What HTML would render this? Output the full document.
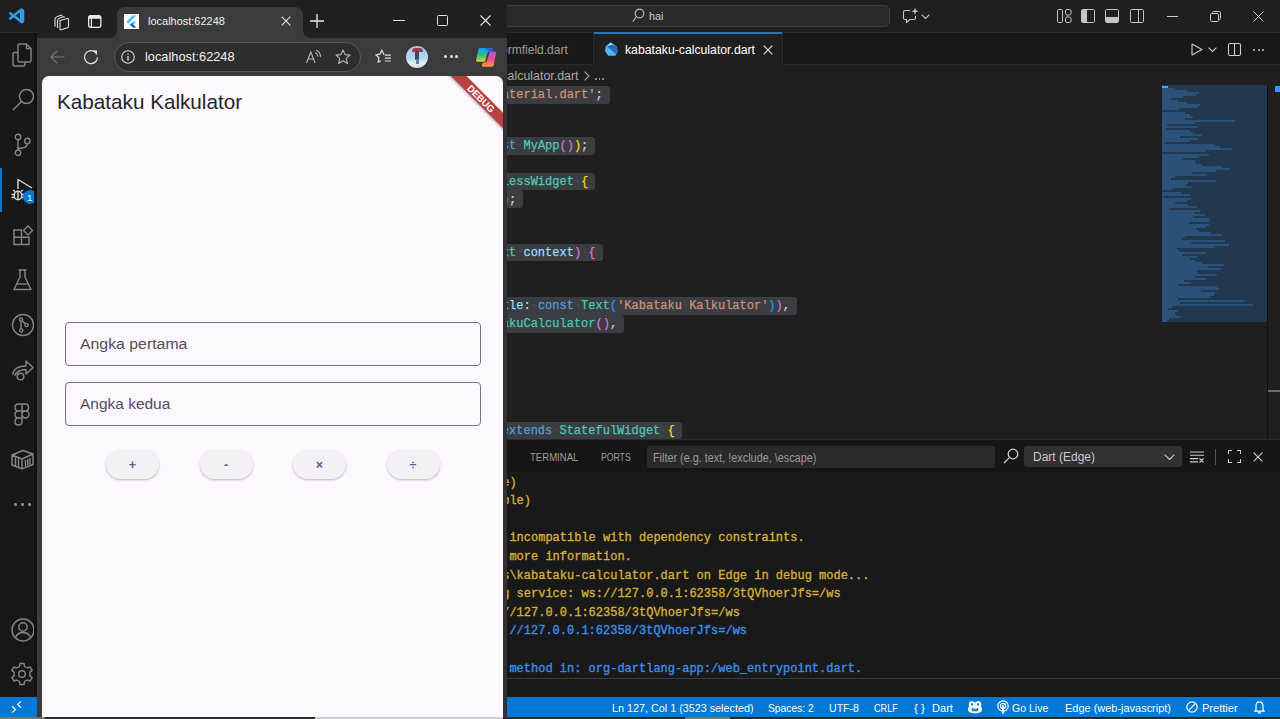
<!DOCTYPE html>
<html><head><meta charset="utf-8">
<style>
*{margin:0;padding:0;box-sizing:border-box}
html,body{width:1280px;height:719px;overflow:hidden;background:#1f1f1f;font-family:"Liberation Sans",sans-serif;position:relative}
.a{position:absolute}
.t{line-height:1;white-space:pre}
svg{position:absolute;overflow:visible}
.sel{height:17.8px;background:#3a3d41;border-radius:3px}
.code{font-family:"Liberation Mono",monospace;font-size:12px;line-height:17.8px;white-space:pre;-webkit-text-stroke:0.25px currentColor}
.code span{-webkit-text-stroke:0.25px}
.term{-webkit-text-stroke:0.3px}
.ws{color:#505050}
.btn{width:53px;height:29.8px;border-radius:15px;background:#f5f0f6;box-shadow:0 1px 3px rgba(0,0,0,.2),0 1px 1px rgba(0,0,0,.08);color:#655594;font-size:12.5px;font-weight:bold;text-align:center;line-height:31.5px}
</style></head><body>
<div class="a" style="left:0px;top:0px;width:1280px;height:32px;background:#1f1f1f;"></div>
<div class="a" style="left:0px;top:32px;width:1280px;height:1px;background:#2b2b2b;"></div>
<svg style="left:0px;top:0px;" width="37" height="32" viewBox="0 0 37 32"><g stroke="#2c9fe6" stroke-width="2.6" stroke-linecap="round" fill="none"><path d="M10.2 13.3 L21.5 21.6"/><path d="M10.2 18.6 L21.5 9.6"/></g><path d="M20 9.5 Q21 8.3 22.4 8.9 L23.6 9.6 Q24.3 10 24.3 10.9 V21.3 Q24.3 22.2 23.6 22.6 L22.4 23.2 Q21 23.8 20 22.6 Z" fill="#2c9fe6"/></svg>
<div class="a" style="left:440px;top:5px;width:450px;height:22px;background:#2a2a2a;border:1px solid #3f3f3f;border-radius:6px"></div>
<svg style="left:632px;top:8px;" width="13" height="15" viewBox="0 0 13 15"><g fill="none" stroke="#b5b5b5" stroke-width="1.2"><circle cx="7.5" cy="5.5" r="4.3"/><path d="M4.5 8.5 L0.8 13.6"/></g></svg>
<div class="a t" style="left:649.4px;top:10.87px;font-size:11.5px;color:#cccccc;transform:scaleX(0.9375);transform-origin:0 0;">hai</div>
<svg style="left:902px;top:7px;" width="18" height="17" viewBox="0 0 18 17"><g fill="none" stroke="#c5c5c5" stroke-width="1.1" stroke-linejoin="round"><path d="M8 3.5 H3 Q1.5 3.5 1.5 5 V11 Q1.5 12.5 3 12.5 H4.5 V15.5 L8 12.5 H12 Q13.5 12.5 13.5 11 V9"/></g><path d="M13 0.5 L13.9 3.3 L16.7 4.2 L13.9 5.1 L13 7.9 L12.1 5.1 L9.3 4.2 L12.1 3.3 Z" fill="#c5c5c5"/></svg>
<svg style="left:921px;top:14px;" width="9" height="6" viewBox="0 0 9 6"><path d="M0.6 0.6 L4.5 4.5 L8.4 0.6" fill="none" stroke="#c5c5c5" stroke-width="1.1"/></svg>
<svg style="left:1057px;top:9px;" width="15" height="14" viewBox="0 0 15 14"><g fill="none" stroke="#c5c5c5" stroke-width="1"><rect x="0.5" y="0.5" width="5" height="13" rx="1"/><rect x="8.5" y="0.5" width="5.5" height="5.5" rx="1.5"/><rect x="8.5" y="8" width="5.5" height="5.5" rx="1.5"/></g></svg>
<svg style="left:1081px;top:9px;" width="14" height="14" viewBox="0 0 14 14"><rect x="0.5" y="0.5" width="13" height="13" rx="1" fill="none" stroke="#c5c5c5"/><rect x="1" y="1" width="5" height="12" fill="#c5c5c5"/></svg>
<svg style="left:1105px;top:9px;" width="14" height="14" viewBox="0 0 14 14"><rect x="0.5" y="0.5" width="13" height="13" rx="1" fill="none" stroke="#c5c5c5"/><rect x="1" y="8" width="12" height="5" fill="#c5c5c5"/></svg>
<svg style="left:1130px;top:9px;" width="14" height="14" viewBox="0 0 14 14"><rect x="0.5" y="0.5" width="13" height="13" rx="1" fill="none" stroke="#c5c5c5"/><path d="M8.5 0.5 V13.5" stroke="#c5c5c5"/></svg>
<div class="a" style="left:1167px;top:16px;width:11px;height:1px;background:#cccccc;"></div>
<svg style="left:1210px;top:11px;" width="11" height="11" viewBox="0 0 11 11"><g fill="none" stroke="#cccccc" stroke-width="1"><rect x="0.5" y="2.5" width="8" height="8" rx="1"/><path d="M2.5 2.5 V1.5 Q2.5 0.5 3.5 0.5 H9.5 Q10.5 0.5 10.5 1.5 V7.5 Q10.5 8.5 9.5 8.5 H8.5"/></g></svg>
<svg style="left:1253px;top:11px;" width="11" height="11" viewBox="0 0 11 11"><path d="M0.5 0.5 L10.5 10.5 M10.5 0.5 L0.5 10.5" stroke="#cccccc" stroke-width="1"/></svg>
<div class="a" style="left:0px;top:33px;width:38px;height:664px;background:#181818;"></div>
<div class="a" style="left:0px;top:168px;width:2px;height:44px;background:#0078d4;"></div>
<svg style="left:12px;top:43px;" width="22" height="24" viewBox="0 0 22 24"><g fill="none" stroke="#858585" stroke-width="1.4" stroke-linejoin="round"><path d="M6 9.5 H2.5 Q1 9.5 1 11 V21.5 Q1 23 2.5 23 H11.5 Q13 23 13 21.5 V19"/><path d="M6 2.5 Q6 1 7.5 1 H14.5 L19 5.5 V17.5 Q19 19 17.5 19 H7.5 Q6 19 6 17.5 Z"/><path d="M14.5 1 V5.5 H19"/></g></svg>
<svg style="left:12px;top:88px;" width="23" height="24" viewBox="0 0 23 24"><g fill="none" stroke="#858585" stroke-width="1.5"><circle cx="14.5" cy="8.5" r="7"/><path d="M9.5 13.5 L1 22"/></g></svg>
<svg style="left:13px;top:133px;" width="20" height="24" viewBox="0 0 20 24"><g fill="none" stroke="#858585" stroke-width="1.4"><circle cx="5" cy="4" r="2.7"/><circle cx="5" cy="19.8" r="2.7"/><circle cx="14.3" cy="8" r="2.7"/><path d="M5 6.7 V17.1 M14.3 10.7 Q14.3 14 10 14.8 L5 15.8"/></g></svg>
<svg style="left:10px;top:178px;" width="26" height="26" viewBox="0 0 26 26"><g fill="none" stroke="#d7d7d7" stroke-width="1.4" stroke-linejoin="round"><path d="M8 11 V1.5 L22 10"/><ellipse cx="8" cy="17.5" rx="3.8" ry="4.3"/><path d="M4.2 16.5 H1.5 M4.2 19.5 H1.5 M11.8 16.5 H14 M11.8 19.5 H14 M5 13.5 L3 12 M11 13.5 L13 12 M8 13.2 V21.8"/></g></svg>
<div class="a" style="left:23px;top:190px;width:14px;height:14px;background:#0078d4;border-radius:50%"></div>
<div class="a t" style="left:27.2px;top:193.46px;font-size:9.5px;color:#ffffff;transform:scaleX(1.0195);transform-origin:0 0;">1</div>
<svg style="left:13px;top:225px;" width="21" height="21" viewBox="0 0 21 21"><g fill="none" stroke="#858585" stroke-width="1.4"><path d="M1 5 H8.5 V19.5 H1 Z M1 12.2 H16 V19.5 H8.5"/><path d="M10.5 5.5 L15 1 L19.5 5.5 L15 10 Z"/></g></svg>
<svg style="left:13px;top:269px;" width="19" height="22" viewBox="0 0 19 22"><g fill="none" stroke="#858585" stroke-width="1.4" stroke-linejoin="round"><path d="M5.5 1 H13.5 M7 1 V8 L1 20.5 H18 L12 8 V1"/><path d="M3.5 15 H15.5"/></g></svg>
<svg style="left:11px;top:313px;" width="24" height="24" viewBox="0 0 24 24"><g fill="none" stroke="#858585" stroke-width="1.4"><circle cx="12" cy="12" r="10.5"/><circle cx="10" cy="6.5" r="1.6"/><circle cx="15.5" cy="12" r="1.6"/><circle cx="10.3" cy="17.5" r="1.6"/><path d="M10 8 V16 M11.2 7.7 L14.3 10.8"/></g></svg>
<svg style="left:11px;top:358px;" width="23" height="23" viewBox="0 0 23 23"><g fill="none" stroke="#858585" stroke-width="1.5" stroke-linejoin="round"><path d="M1.5 16.5 Q3 8 15 8 V3 L22 9.5 L15 16 V11.5 Q7 11.5 3.5 17.5"/><circle cx="9.5" cy="18.5" r="3.3"/></g></svg>
<svg style="left:14px;top:403px;" width="16" height="24" viewBox="0 0 16 24"><g fill="none" stroke="#858585" stroke-width="1.4"><path d="M4.5 1 H11.5 Q14.5 1 14.5 4.5 Q14.5 8 11.5 8 H4.5 Q1 8 1 4.5 Q1 1 4.5 1 Z M8 1 V15 M4.5 8 Q1 8 1 11.5 Q1 15 4.5 15 H8 M11.5 8 A3.5 3.5 0 1 1 11.5 15 A3.5 3.5 0 1 1 11.5 8 Z M4.5 15 Q1 15 1 18.5 Q1 22 4.5 22 Q8 22 8 18.5 V15"/></g></svg>
<svg style="left:11px;top:449px;" width="23" height="21" viewBox="0 0 23 21"><g fill="none" stroke="#858585" stroke-width="1.4" stroke-linejoin="round"><path d="M1 6 L12 1.5 L22 5 V15.5 L11 19.8 L1 16 Z M1 6 L11 10 L22 5 M11 10 V19.8"/><path d="M4.5 8 V17 M7.5 9 V18.5 M14.5 11 V17.5 M16.8 10 V16.5 M19 9 V15.5"/></g></svg>
<div class="a" style="left:14.299999999999999px;top:503.3px;width:2.6px;height:2.6px;background:#8a8a8a;border-radius:50%"></div>
<div class="a" style="left:21.3px;top:503.3px;width:2.6px;height:2.6px;background:#8a8a8a;border-radius:50%"></div>
<div class="a" style="left:28.3px;top:503.3px;width:2.6px;height:2.6px;background:#8a8a8a;border-radius:50%"></div>
<svg style="left:11px;top:618px;" width="24" height="24" viewBox="0 0 24 24"><g fill="none" stroke="#858585" stroke-width="1.5"><circle cx="12" cy="12" r="11"/><circle cx="12" cy="9" r="4.2"/><path d="M4.5 19.5 Q6.5 14.5 12 14.5 Q17.5 14.5 19.5 19.5"/></g></svg>
<svg style="left:10px;top:662px;" width="24" height="24" viewBox="0 0 24 24"><g fill="none" stroke="#858585" stroke-width="1.4" stroke-linejoin="round"><path d="M10 1.5 H14 L14.6 4.6 Q16 5.1 17.2 6 L20.1 4.9 L22.1 8.4 L19.8 10.4 Q20 12 19.8 13.6 L22.1 15.6 L20.1 19.1 L17.2 18 Q16 18.9 14.6 19.4 L14 22.5 H10 L9.4 19.4 Q8 18.9 6.8 18 L3.9 19.1 L1.9 15.6 L4.2 13.6 Q4 12 4.2 10.4 L1.9 8.4 L3.9 4.9 L6.8 6 Q8 5.1 9.4 4.6 Z"/><circle cx="12" cy="12" r="3.3"/></g></svg>
<div class="a" style="left:38px;top:33px;width:1242px;height:32px;background:#181818;"></div>
<div class="a" style="left:38px;top:64px;width:1242px;height:1px;background:#2b2b2b;"></div>
<div class="a" style="left:593px;top:33px;width:1px;height:32px;background:#2b2b2b;"></div>
<div class="a t" style="left:500.5px;top:43.93px;font-size:12.6px;color:#9d9d9d;transform:scaleX(0.9543);transform-origin:0 0;">ormfield.dart</div>
<div class="a" style="left:594px;top:32px;width:188px;height:33px;background:#1f1f1f;border-top:2px solid #2a74b0"></div>
<div class="a" style="left:782px;top:33px;width:1px;height:32px;background:#2b2b2b;"></div>
<svg style="left:604px;top:42px;" width="15" height="15" viewBox="0 0 15 15"><path d="M6.5 0.6 L12.6 4.3 L13.6 9.6 L11.4 13.8 L4.2 13.8 L1 9 L1.6 4.2 Z" fill="#54b3f2"/><path d="M2.3 3.6 L7.5 3 L12.6 4.3 L13.6 9.6 L12.3 12.4 Z" fill="#2369bd"/><path d="M6.5 0.6 L9 2.1 L6.4 3.2 L3 3.4 Z" fill="#9ad6f8"/></svg>
<div class="a t" style="left:625.0px;top:43.93px;font-size:12.6px;color:#ffffff;transform:scaleX(0.9722);transform-origin:0 0;">kabataku-calculator.dart</div>
<svg style="left:763px;top:45px;" width="10" height="10" viewBox="0 0 10 10"><path d="M0.7 0.7 L9.3 9.3 M9.3 0.7 L0.7 9.3" stroke="#dddddd" stroke-width="1.2"/></svg>
<svg style="left:1191px;top:43px;" width="12" height="13" viewBox="0 0 12 13"><path d="M1 1 L11 6.5 L1 12 Z" fill="none" stroke="#cccccc" stroke-width="1.1" stroke-linejoin="round"/></svg>
<svg style="left:1208px;top:47px;" width="9" height="6" viewBox="0 0 9 6"><path d="M0.6 0.6 L4.5 4.5 L8.4 0.6" fill="none" stroke="#cccccc" stroke-width="1.1"/></svg>
<svg style="left:1228px;top:43px;" width="13" height="13" viewBox="0 0 13 13"><g fill="none" stroke="#cccccc" stroke-width="1.1"><rect x="0.5" y="0.5" width="12" height="12" rx="1.5"/><path d="M6.5 0.5 V12.5"/></g></svg>
<div class="a" style="left:1253px;top:48.5px;width:2.2px;height:2.2px;background:#cccccc;border-radius:50%"></div>
<div class="a" style="left:1257.5px;top:48.5px;width:2.2px;height:2.2px;background:#cccccc;border-radius:50%"></div>
<div class="a" style="left:1262px;top:48.5px;width:2.2px;height:2.2px;background:#cccccc;border-radius:50%"></div>
<div class="a t" style="left:447.0px;top:69.59px;font-size:12.3px;color:#a9a9a9;transform:scaleX(1.0072);transform-origin:0 0;">kabataku-calculator.dart</div>
<svg style="left:584px;top:71px;" width="6" height="10" viewBox="0 0 6 10"><path d="M0.6 0.6 L5 5 L0.6 9.4" fill="none" stroke="#a9a9a9" stroke-width="1.1"/></svg>
<div class="a" style="left:595px;top:78px;width:1.8px;height:1.8px;background:#a9a9a9;border-radius:50%"></div>
<div class="a" style="left:598.5px;top:78px;width:1.8px;height:1.8px;background:#a9a9a9;border-radius:50%"></div>
<div class="a" style="left:602px;top:78px;width:1.8px;height:1.8px;background:#a9a9a9;border-radius:50%"></div>
<div class="a sel" style="left:321.8px;top:86.00px;width:288.0px"></div>
<div class="a sel" style="left:321.8px;top:101.30px;width:7.2px"></div>
<div class="a sel" style="left:321.8px;top:119.10px;width:7.2px"></div>
<div class="a sel" style="left:321.8px;top:136.90px;width:273.6px"></div>
<div class="a sel" style="left:321.8px;top:154.70px;width:7.2px"></div>
<div class="a sel" style="left:321.8px;top:172.50px;width:273.6px"></div>
<div class="a sel" style="left:321.8px;top:190.30px;width:201.6px"></div>
<div class="a sel" style="left:321.8px;top:208.10px;width:7.2px"></div>
<div class="a sel" style="left:321.8px;top:225.90px;width:86.4px"></div>
<div class="a sel" style="left:321.8px;top:243.70px;width:280.8px"></div>
<div class="a sel" style="left:321.8px;top:261.50px;width:172.8px"></div>
<div class="a sel" style="left:321.8px;top:279.30px;width:158.4px"></div>
<div class="a sel" style="left:321.8px;top:297.10px;width:475.2px"></div>
<div class="a sel" style="left:321.8px;top:314.90px;width:302.4px"></div>
<div class="a sel" style="left:321.8px;top:332.70px;width:64.8px"></div>
<div class="a sel" style="left:321.8px;top:350.50px;width:50.4px"></div>
<div class="a sel" style="left:321.8px;top:368.30px;width:28.8px"></div>
<div class="a sel" style="left:321.8px;top:386.10px;width:14.4px"></div>
<div class="a sel" style="left:321.8px;top:403.90px;width:7.2px"></div>
<div class="a sel" style="left:321.8px;top:421.70px;width:360.0px"></div>
<div class="a code" style="left:321.8px;top:87.30px"><span style="color:#c586c0">import</span><span class="ws">·</span><span style="color:#ce9178">&#x27;package:flutter/material.dart&#x27;</span><span style="color:#cccccc">;</span></div>
<div class="a code" style="left:321.8px;top:102.60px"></div>
<div class="a code" style="left:321.8px;top:120.40px"></div>
<div class="a code" style="left:321.8px;top:138.20px"><span style="color:#569cd6">void</span><span class="ws">·</span><span style="color:#dcdcaa">main</span><span style="color:#ffd700">(</span><span style="color:#ffd700">)</span><span class="ws">·</span><span style="color:#cccccc">=&gt;</span><span class="ws">·</span><span style="color:#dcdcaa">runApp</span><span style="color:#ffd700">(</span><span style="color:#569cd6">const</span><span class="ws">·</span><span style="color:#4ec9b0">MyApp</span><span style="color:#da70d6">(</span><span style="color:#da70d6">)</span><span style="color:#ffd700">)</span><span style="color:#cccccc">;</span></div>
<div class="a code" style="left:321.8px;top:156.00px"></div>
<div class="a code" style="left:321.8px;top:173.80px"><span style="color:#569cd6">class</span><span class="ws">·</span><span style="color:#4ec9b0">MyApp</span><span class="ws">·</span><span style="color:#569cd6">extends</span><span class="ws">·</span><span style="color:#4ec9b0">StatelessWidget</span><span class="ws">·</span><span style="color:#ffd700">{</span></div>
<div class="a code" style="left:321.8px;top:191.60px"><span class="ws">·</span><span class="ws">·</span><span style="color:#569cd6">const</span><span class="ws">·</span><span style="color:#4ec9b0">MyApp</span><span style="color:#da70d6">(</span><span style="color:#179fff">{</span><span style="color:#569cd6">super</span><span style="color:#cccccc">.</span><span style="color:#9cdcfe">key</span><span style="color:#179fff">}</span><span style="color:#da70d6">)</span><span style="color:#cccccc">;</span></div>
<div class="a code" style="left:321.8px;top:209.40px"></div>
<div class="a code" style="left:321.8px;top:227.20px"><span class="ws">·</span><span class="ws">·</span><span style="color:#cccccc">@override</span></div>
<div class="a code" style="left:321.8px;top:245.00px"><span class="ws">·</span><span class="ws">·</span><span style="color:#4ec9b0">Widget</span><span class="ws">·</span><span style="color:#dcdcaa">build</span><span style="color:#da70d6">(</span><span style="color:#4ec9b0">BuildContext</span><span class="ws">·</span><span style="color:#9cdcfe">context</span><span style="color:#da70d6">)</span><span class="ws">·</span><span style="color:#da70d6">{</span></div>
<div class="a code" style="left:321.8px;top:262.80px"><span class="ws">·</span><span class="ws">·</span><span class="ws">·</span><span class="ws">·</span><span style="color:#c586c0">return</span><span class="ws">·</span><span style="color:#4ec9b0">MaterialApp</span><span style="color:#179fff">(</span></div>
<div class="a code" style="left:321.8px;top:280.60px"><span class="ws">·</span><span class="ws">·</span><span class="ws">·</span><span class="ws">·</span><span class="ws">·</span><span class="ws">·</span><span style="color:#9cdcfe">home</span><span style="color:#cccccc">:</span><span class="ws">·</span><span style="color:#4ec9b0">Scaffold</span><span style="color:#ffd700">(</span></div>
<div class="a code" style="left:321.8px;top:298.40px"><span class="ws">·</span><span class="ws">·</span><span class="ws">·</span><span class="ws">·</span><span class="ws">·</span><span class="ws">·</span><span class="ws">·</span><span class="ws">·</span><span style="color:#9cdcfe">appBar</span><span style="color:#cccccc">:</span><span class="ws">·</span><span style="color:#4ec9b0">AppBar</span><span style="color:#da70d6">(</span><span style="color:#9cdcfe">title</span><span style="color:#cccccc">:</span><span class="ws">·</span><span style="color:#569cd6">const</span><span class="ws">·</span><span style="color:#4ec9b0">Text</span><span style="color:#179fff">(</span><span style="color:#ce9178">&#x27;Kabataku</span><span class="ws">·</span><span style="color:#ce9178">Kalkulator&#x27;</span><span style="color:#179fff">)</span><span style="color:#da70d6">)</span><span style="color:#cccccc">,</span></div>
<div class="a code" style="left:321.8px;top:316.20px"><span class="ws">·</span><span class="ws">·</span><span class="ws">·</span><span class="ws">·</span><span class="ws">·</span><span class="ws">·</span><span class="ws">·</span><span class="ws">·</span><span style="color:#9cdcfe">body</span><span style="color:#cccccc">:</span><span class="ws">·</span><span style="color:#569cd6">const</span><span class="ws">·</span><span style="color:#4ec9b0">KabatakuCalculator</span><span style="color:#da70d6">(</span><span style="color:#da70d6">)</span><span style="color:#cccccc">,</span></div>
<div class="a code" style="left:321.8px;top:334.00px"><span class="ws">·</span><span class="ws">·</span><span class="ws">·</span><span class="ws">·</span><span class="ws">·</span><span class="ws">·</span><span style="color:#ffd700">)</span><span style="color:#cccccc">,</span></div>
<div class="a code" style="left:321.8px;top:351.80px"><span class="ws">·</span><span class="ws">·</span><span class="ws">·</span><span class="ws">·</span><span style="color:#179fff">)</span><span style="color:#cccccc">;</span></div>
<div class="a code" style="left:321.8px;top:369.60px"><span class="ws">·</span><span class="ws">·</span><span style="color:#da70d6">}</span></div>
<div class="a code" style="left:321.8px;top:387.40px"><span style="color:#ffd700">}</span></div>
<div class="a code" style="left:321.8px;top:405.20px"></div>
<div class="a code" style="left:321.8px;top:423.00px"><span style="color:#569cd6">class</span><span class="ws">·</span><span style="color:#4ec9b0">KabatakuCalculator</span><span class="ws">·</span><span style="color:#569cd6">extends</span><span class="ws">·</span><span style="color:#4ec9b0">StatefulWidget</span><span class="ws">·</span><span style="color:#ffd700">{</span></div>
<div class="a" style="left:1162px;top:85px;width:105px;height:237px;background:#22384e;"></div>
<div class="a" style="left:1162px;top:86px;width:1px;height:2px;background:#2a5179"></div>
<div class="a" style="left:1162px;top:88px;width:3px;height:2px;background:#2a5179"></div>
<div class="a" style="left:1165px;top:88px;width:10px;height:2px;background:#2a5179"></div>
<div class="a" style="left:1162px;top:90px;width:3px;height:2px;background:#2a5179"></div>
<div class="a" style="left:1165px;top:90px;width:22px;height:2px;background:#2a5179"></div>
<div class="a" style="left:1162px;top:92px;width:1px;height:2px;background:#2a5179"></div>
<div class="a" style="left:1163px;top:92px;width:36px;height:2px;background:#2a5179"></div>
<div class="a" style="left:1162px;top:94px;width:3px;height:2px;background:#2a5179"></div>
<div class="a" style="left:1165px;top:94px;width:31px;height:2px;background:#2a5179"></div>
<div class="a" style="left:1162px;top:96px;width:1px;height:2px;background:#2a5179"></div>
<div class="a" style="left:1163px;top:96px;width:20px;height:2px;background:#2a5179"></div>
<div class="a" style="left:1162px;top:98px;width:3px;height:2px;background:#2a5179"></div>
<div class="a" style="left:1165px;top:98px;width:6px;height:2px;background:#2a5179"></div>
<div class="a" style="left:1162px;top:100px;width:16px;height:2px;background:#2a5179"></div>
<div class="a" style="left:1162px;top:102px;width:25px;height:2px;background:#2a5179"></div>
<div class="a" style="left:1162px;top:104px;width:2px;height:2px;background:#2a5179"></div>
<div class="a" style="left:1164px;top:104px;width:36px;height:2px;background:#2a5179"></div>
<div class="a" style="left:1162px;top:106px;width:3px;height:2px;background:#2a5179"></div>
<div class="a" style="left:1165px;top:106px;width:33px;height:2px;background:#2a5179"></div>
<div class="a" style="left:1162px;top:108px;width:3px;height:2px;background:#2a5179"></div>
<div class="a" style="left:1165px;top:108px;width:14px;height:2px;background:#2a5179"></div>
<div class="a" style="left:1162px;top:112px;width:1px;height:2px;background:#2a5179"></div>
<div class="a" style="left:1163px;top:112px;width:22px;height:2px;background:#2a5179"></div>
<div class="a" style="left:1162px;top:114px;width:3px;height:2px;background:#2a5179"></div>
<div class="a" style="left:1165px;top:114px;width:25px;height:2px;background:#2a5179"></div>
<div class="a" style="left:1162px;top:116px;width:3px;height:2px;background:#2a5179"></div>
<div class="a" style="left:1165px;top:116px;width:28px;height:2px;background:#2a5179"></div>
<div class="a" style="left:1162px;top:118px;width:3px;height:2px;background:#2a5179"></div>
<div class="a" style="left:1165px;top:118px;width:20px;height:2px;background:#2a5179"></div>
<div class="a" style="left:1162px;top:120px;width:5px;height:2px;background:#2a5179"></div>
<div class="a" style="left:1167px;top:120px;width:68px;height:2px;background:#2a5179"></div>
<div class="a" style="left:1162px;top:122px;width:6px;height:2px;background:#2a5179"></div>
<div class="a" style="left:1168px;top:122px;width:27px;height:2px;background:#2a5179"></div>
<div class="a" style="left:1162px;top:124px;width:5px;height:2px;background:#2a5179"></div>
<div class="a" style="left:1162px;top:126px;width:6px;height:2px;background:#2a5179"></div>
<div class="a" style="left:1168px;top:126px;width:30px;height:2px;background:#2a5179"></div>
<div class="a" style="left:1162px;top:128px;width:4px;height:2px;background:#2a5179"></div>
<div class="a" style="left:1162px;top:130px;width:5px;height:2px;background:#2a5179"></div>
<div class="a" style="left:1167px;top:130px;width:23px;height:2px;background:#2a5179"></div>
<div class="a" style="left:1162px;top:132px;width:4px;height:2px;background:#2a5179"></div>
<div class="a" style="left:1166px;top:132px;width:27px;height:2px;background:#2a5179"></div>
<div class="a" style="left:1162px;top:134px;width:40px;height:2px;background:#2a5179"></div>
<div class="a" style="left:1162px;top:136px;width:3px;height:2px;background:#2a5179"></div>
<div class="a" style="left:1165px;top:136px;width:15px;height:2px;background:#2a5179"></div>
<div class="a" style="left:1162px;top:138px;width:36px;height:2px;background:#2a5179"></div>
<div class="a" style="left:1162px;top:140px;width:28px;height:2px;background:#2a5179"></div>
<div class="a" style="left:1162px;top:142px;width:3px;height:2px;background:#2a5179"></div>
<div class="a" style="left:1162px;top:144px;width:4px;height:2px;background:#2a5179"></div>
<div class="a" style="left:1166px;top:144px;width:49px;height:2px;background:#2a5179"></div>
<div class="a" style="left:1162px;top:146px;width:3px;height:2px;background:#2a5179"></div>
<div class="a" style="left:1165px;top:146px;width:55px;height:2px;background:#2a5179"></div>
<div class="a" style="left:1162px;top:148px;width:4px;height:2px;background:#2a5179"></div>
<div class="a" style="left:1166px;top:148px;width:66px;height:2px;background:#2a5179"></div>
<div class="a" style="left:1162px;top:150px;width:4px;height:2px;background:#2a5179"></div>
<div class="a" style="left:1166px;top:150px;width:40px;height:2px;background:#2a5179"></div>
<div class="a" style="left:1162px;top:154px;width:1px;height:2px;background:#2a5179"></div>
<div class="a" style="left:1163px;top:154px;width:46px;height:2px;background:#2a5179"></div>
<div class="a" style="left:1162px;top:156px;width:3px;height:2px;background:#2a5179"></div>
<div class="a" style="left:1165px;top:156px;width:34px;height:2px;background:#2a5179"></div>
<div class="a" style="left:1162px;top:158px;width:4px;height:2px;background:#2a5179"></div>
<div class="a" style="left:1166px;top:158px;width:17px;height:2px;background:#2a5179"></div>
<div class="a" style="left:1162px;top:160px;width:5px;height:2px;background:#2a5179"></div>
<div class="a" style="left:1167px;top:160px;width:28px;height:2px;background:#2a5179"></div>
<div class="a" style="left:1162px;top:162px;width:2px;height:2px;background:#2a5179"></div>
<div class="a" style="left:1164px;top:162px;width:32px;height:2px;background:#2a5179"></div>
<div class="a" style="left:1162px;top:164px;width:8px;height:2px;background:#2a5179"></div>
<div class="a" style="left:1170px;top:164px;width:32px;height:2px;background:#2a5179"></div>
<div class="a" style="left:1162px;top:166px;width:9px;height:2px;background:#2a5179"></div>
<div class="a" style="left:1171px;top:166px;width:51px;height:2px;background:#2a5179"></div>
<div class="a" style="left:1162px;top:168px;width:9px;height:2px;background:#2a5179"></div>
<div class="a" style="left:1171px;top:168px;width:59px;height:2px;background:#2a5179"></div>
<div class="a" style="left:1162px;top:170px;width:6px;height:2px;background:#2a5179"></div>
<div class="a" style="left:1168px;top:170px;width:48px;height:2px;background:#2a5179"></div>
<div class="a" style="left:1162px;top:172px;width:3px;height:2px;background:#2a5179"></div>
<div class="a" style="left:1165px;top:172px;width:27px;height:2px;background:#2a5179"></div>
<div class="a" style="left:1162px;top:174px;width:4px;height:2px;background:#2a5179"></div>
<div class="a" style="left:1166px;top:174px;width:41px;height:2px;background:#2a5179"></div>
<div class="a" style="left:1162px;top:176px;width:5px;height:2px;background:#2a5179"></div>
<div class="a" style="left:1167px;top:176px;width:8px;height:2px;background:#2a5179"></div>
<div class="a" style="left:1162px;top:178px;width:9px;height:2px;background:#2a5179"></div>
<div class="a" style="left:1162px;top:180px;width:9px;height:2px;background:#2a5179"></div>
<div class="a" style="left:1171px;top:180px;width:45px;height:2px;background:#2a5179"></div>
<div class="a" style="left:1162px;top:182px;width:26px;height:2px;background:#2a5179"></div>
<div class="a" style="left:1162px;top:184px;width:7px;height:2px;background:#2a5179"></div>
<div class="a" style="left:1169px;top:184px;width:17px;height:2px;background:#2a5179"></div>
<div class="a" style="left:1162px;top:186px;width:5px;height:2px;background:#2a5179"></div>
<div class="a" style="left:1167px;top:186px;width:25px;height:2px;background:#2a5179"></div>
<div class="a" style="left:1162px;top:188px;width:11px;height:2px;background:#2a5179"></div>
<div class="a" style="left:1162px;top:192px;width:5px;height:2px;background:#2a5179"></div>
<div class="a" style="left:1167px;top:192px;width:14px;height:2px;background:#2a5179"></div>
<div class="a" style="left:1162px;top:194px;width:4px;height:2px;background:#2a5179"></div>
<div class="a" style="left:1166px;top:194px;width:24px;height:2px;background:#2a5179"></div>
<div class="a" style="left:1162px;top:196px;width:2px;height:2px;background:#2a5179"></div>
<div class="a" style="left:1162px;top:198px;width:12px;height:2px;background:#2a5179"></div>
<div class="a" style="left:1174px;top:198px;width:17px;height:2px;background:#2a5179"></div>
<div class="a" style="left:1162px;top:200px;width:8px;height:2px;background:#2a5179"></div>
<div class="a" style="left:1170px;top:200px;width:17px;height:2px;background:#2a5179"></div>
<div class="a" style="left:1162px;top:202px;width:5px;height:2px;background:#2a5179"></div>
<div class="a" style="left:1167px;top:202px;width:8px;height:2px;background:#2a5179"></div>
<div class="a" style="left:1162px;top:204px;width:14px;height:2px;background:#2a5179"></div>
<div class="a" style="left:1176px;top:204px;width:12px;height:2px;background:#2a5179"></div>
<div class="a" style="left:1162px;top:206px;width:7px;height:2px;background:#2a5179"></div>
<div class="a" style="left:1169px;top:206px;width:28px;height:2px;background:#2a5179"></div>
<div class="a" style="left:1162px;top:208px;width:7px;height:2px;background:#2a5179"></div>
<div class="a" style="left:1162px;top:210px;width:10px;height:2px;background:#2a5179"></div>
<div class="a" style="left:1172px;top:210px;width:28px;height:2px;background:#2a5179"></div>
<div class="a" style="left:1162px;top:212px;width:5px;height:2px;background:#2a5179"></div>
<div class="a" style="left:1167px;top:212px;width:27px;height:2px;background:#2a5179"></div>
<div class="a" style="left:1162px;top:214px;width:19px;height:2px;background:#2a5179"></div>
<div class="a" style="left:1181px;top:214px;width:24px;height:2px;background:#2a5179"></div>
<div class="a" style="left:1162px;top:216px;width:16px;height:2px;background:#2a5179"></div>
<div class="a" style="left:1178px;top:216px;width:15px;height:2px;background:#2a5179"></div>
<div class="a" style="left:1162px;top:218px;width:24px;height:2px;background:#2a5179"></div>
<div class="a" style="left:1186px;top:218px;width:23px;height:2px;background:#2a5179"></div>
<div class="a" style="left:1162px;top:220px;width:21px;height:2px;background:#2a5179"></div>
<div class="a" style="left:1183px;top:220px;width:27px;height:2px;background:#2a5179"></div>
<div class="a" style="left:1162px;top:222px;width:15px;height:2px;background:#2a5179"></div>
<div class="a" style="left:1177px;top:222px;width:12px;height:2px;background:#2a5179"></div>
<div class="a" style="left:1162px;top:224px;width:17px;height:2px;background:#2a5179"></div>
<div class="a" style="left:1179px;top:224px;width:30px;height:2px;background:#2a5179"></div>
<div class="a" style="left:1162px;top:226px;width:23px;height:2px;background:#2a5179"></div>
<div class="a" style="left:1185px;top:226px;width:21px;height:2px;background:#2a5179"></div>
<div class="a" style="left:1162px;top:228px;width:19px;height:2px;background:#2a5179"></div>
<div class="a" style="left:1181px;top:228px;width:15px;height:2px;background:#2a5179"></div>
<div class="a" style="left:1162px;top:230px;width:19px;height:2px;background:#2a5179"></div>
<div class="a" style="left:1181px;top:230px;width:18px;height:2px;background:#2a5179"></div>
<div class="a" style="left:1162px;top:232px;width:22px;height:2px;background:#2a5179"></div>
<div class="a" style="left:1184px;top:232px;width:27px;height:2px;background:#2a5179"></div>
<div class="a" style="left:1162px;top:234px;width:24px;height:2px;background:#2a5179"></div>
<div class="a" style="left:1186px;top:234px;width:36px;height:2px;background:#2a5179"></div>
<div class="a" style="left:1162px;top:236px;width:23px;height:2px;background:#2a5179"></div>
<div class="a" style="left:1162px;top:238px;width:20px;height:2px;background:#2a5179"></div>
<div class="a" style="left:1162px;top:240px;width:21px;height:2px;background:#2a5179"></div>
<div class="a" style="left:1183px;top:240px;width:42px;height:2px;background:#2a5179"></div>
<div class="a" style="left:1162px;top:242px;width:17px;height:2px;background:#2a5179"></div>
<div class="a" style="left:1179px;top:242px;width:12px;height:2px;background:#2a5179"></div>
<div class="a" style="left:1162px;top:244px;width:24px;height:2px;background:#2a5179"></div>
<div class="a" style="left:1186px;top:244px;width:43px;height:2px;background:#2a5179"></div>
<div class="a" style="left:1162px;top:246px;width:22px;height:2px;background:#2a5179"></div>
<div class="a" style="left:1184px;top:246px;width:31px;height:2px;background:#2a5179"></div>
<div class="a" style="left:1162px;top:248px;width:15px;height:2px;background:#2a5179"></div>
<div class="a" style="left:1162px;top:250px;width:17px;height:2px;background:#2a5179"></div>
<div class="a" style="left:1162px;top:252px;width:22px;height:2px;background:#2a5179"></div>
<div class="a" style="left:1184px;top:252px;width:22px;height:2px;background:#2a5179"></div>
<div class="a" style="left:1162px;top:254px;width:20px;height:2px;background:#2a5179"></div>
<div class="a" style="left:1162px;top:256px;width:15px;height:2px;background:#2a5179"></div>
<div class="a" style="left:1177px;top:256px;width:20px;height:2px;background:#2a5179"></div>
<div class="a" style="left:1162px;top:258px;width:17px;height:2px;background:#2a5179"></div>
<div class="a" style="left:1179px;top:258px;width:11px;height:2px;background:#2a5179"></div>
<div class="a" style="left:1162px;top:260px;width:20px;height:2px;background:#2a5179"></div>
<div class="a" style="left:1182px;top:260px;width:13px;height:2px;background:#2a5179"></div>
<div class="a" style="left:1162px;top:262px;width:23px;height:2px;background:#2a5179"></div>
<div class="a" style="left:1185px;top:262px;width:17px;height:2px;background:#2a5179"></div>
<div class="a" style="left:1162px;top:264px;width:18px;height:2px;background:#2a5179"></div>
<div class="a" style="left:1180px;top:264px;width:44px;height:2px;background:#2a5179"></div>
<div class="a" style="left:1162px;top:266px;width:14px;height:2px;background:#2a5179"></div>
<div class="a" style="left:1176px;top:266px;width:32px;height:2px;background:#2a5179"></div>
<div class="a" style="left:1162px;top:268px;width:15px;height:2px;background:#2a5179"></div>
<div class="a" style="left:1177px;top:268px;width:44px;height:2px;background:#2a5179"></div>
<div class="a" style="left:1162px;top:270px;width:15px;height:2px;background:#2a5179"></div>
<div class="a" style="left:1177px;top:270px;width:20px;height:2px;background:#2a5179"></div>
<div class="a" style="left:1162px;top:272px;width:18px;height:2px;background:#2a5179"></div>
<div class="a" style="left:1180px;top:272px;width:18px;height:2px;background:#2a5179"></div>
<div class="a" style="left:1162px;top:274px;width:14px;height:2px;background:#2a5179"></div>
<div class="a" style="left:1176px;top:274px;width:41px;height:2px;background:#2a5179"></div>
<div class="a" style="left:1162px;top:276px;width:20px;height:2px;background:#2a5179"></div>
<div class="a" style="left:1182px;top:276px;width:13px;height:2px;background:#2a5179"></div>
<div class="a" style="left:1162px;top:278px;width:17px;height:2px;background:#2a5179"></div>
<div class="a" style="left:1179px;top:278px;width:27px;height:2px;background:#2a5179"></div>
<div class="a" style="left:1162px;top:280px;width:22px;height:2px;background:#2a5179"></div>
<div class="a" style="left:1162px;top:282px;width:19px;height:2px;background:#2a5179"></div>
<div class="a" style="left:1181px;top:282px;width:10px;height:2px;background:#2a5179"></div>
<div class="a" style="left:1162px;top:284px;width:16px;height:2px;background:#2a5179"></div>
<div class="a" style="left:1162px;top:286px;width:15px;height:2px;background:#2a5179"></div>
<div class="a" style="left:1177px;top:286px;width:40px;height:2px;background:#2a5179"></div>
<div class="a" style="left:1162px;top:288px;width:15px;height:2px;background:#2a5179"></div>
<div class="a" style="left:1177px;top:288px;width:42px;height:2px;background:#2a5179"></div>
<div class="a" style="left:1162px;top:290px;width:19px;height:2px;background:#2a5179"></div>
<div class="a" style="left:1181px;top:290px;width:20px;height:2px;background:#2a5179"></div>
<div class="a" style="left:1162px;top:292px;width:19px;height:2px;background:#2a5179"></div>
<div class="a" style="left:1181px;top:292px;width:34px;height:2px;background:#2a5179"></div>
<div class="a" style="left:1162px;top:294px;width:23px;height:2px;background:#2a5179"></div>
<div class="a" style="left:1185px;top:294px;width:29px;height:2px;background:#2a5179"></div>
<div class="a" style="left:1162px;top:296px;width:17px;height:2px;background:#2a5179"></div>
<div class="a" style="left:1179px;top:296px;width:31px;height:2px;background:#2a5179"></div>
<div class="a" style="left:1162px;top:298px;width:16px;height:2px;background:#2a5179"></div>
<div class="a" style="left:1162px;top:300px;width:19px;height:2px;background:#2a5179"></div>
<div class="a" style="left:1181px;top:300px;width:64px;height:2px;background:#2a5179"></div>
<div class="a" style="left:1162px;top:302px;width:18px;height:2px;background:#2a5179"></div>
<div class="a" style="left:1162px;top:304px;width:17px;height:2px;background:#2a5179"></div>
<div class="a" style="left:1179px;top:304px;width:74px;height:2px;background:#2a5179"></div>
<div class="a" style="left:1162px;top:306px;width:1px;height:2px;background:#2a5179"></div>
<div class="a" style="left:1163px;top:306px;width:9px;height:2px;background:#2a5179"></div>
<div class="a" style="left:1162px;top:308px;width:1px;height:2px;background:#2a5179"></div>
<div class="a" style="left:1163px;top:308px;width:5px;height:2px;background:#2a5179"></div>
<div class="a" style="left:1162px;top:310px;width:10px;height:2px;background:#2a5179"></div>
<div class="a" style="left:1172px;top:310px;width:6px;height:2px;background:#2a5179"></div>
<div class="a" style="left:1162px;top:312px;width:13px;height:2px;background:#2a5179"></div>
<div class="a" style="left:1162px;top:314px;width:6px;height:2px;background:#2a5179"></div>
<div class="a" style="left:1168px;top:314px;width:8px;height:2px;background:#2a5179"></div>
<div class="a" style="left:1162px;top:316px;width:18px;height:2px;background:#2a5179"></div>
<div class="a" style="left:1180px;top:316px;width:1px;height:2px;background:#2a5179"></div>
<div class="a" style="left:1162px;top:318px;width:7px;height:2px;background:#2a5179"></div>
<div class="a" style="left:1162px;top:320px;width:5px;height:2px;background:#2a5179"></div>
<div class="a" style="left:1162px;top:86px;width:6px;height:2px;background:#4da3f5;"></div>
<div class="a" style="left:1267px;top:85px;width:1px;height:354px;background:#121212;"></div>
<div class="a" style="left:1275px;top:86px;width:5px;height:6px;background:#3794ff;"></div>
<div class="a" style="left:1268px;top:390px;width:12px;height:2px;background:#6b6b6b;"></div>
<div class="a" style="left:38px;top:439px;width:1242px;height:258px;background:#191919;"></div>
<div class="a" style="left:38px;top:439px;width:1242px;height:33px;background:#161616;"></div>
<div class="a" style="left:38px;top:439px;width:1242px;height:1px;background:#2b2b2b;"></div>
<div class="a" style="left:38px;top:678px;width:1242px;height:1px;background:#3a3a3a;"></div>
<div class="a t" style="left:529.7px;top:451.91px;font-size:10.5px;color:#9d9d9d;transform:scaleX(0.9116);transform-origin:0 0;">TERMINAL</div>
<div class="a t" style="left:600.8px;top:451.91px;font-size:10.5px;color:#9d9d9d;transform:scaleX(0.8254);transform-origin:0 0;">PORTS</div>
<div class="a" style="left:647px;top:446px;width:348px;height:22px;background:#2a2a2a;border-radius:2px"></div>
<div class="a t" style="left:653.0px;top:452.14px;font-size:12px;color:#9a9a9a;transform:scaleX(0.9035);transform-origin:0 0;">Filter (e.g. text, !exclude, \escape)</div>
<svg style="left:1003px;top:448px;" width="16" height="16" viewBox="0 0 16 16"><g fill="none" stroke="#cccccc" stroke-width="1.3"><circle cx="10" cy="6" r="4.8"/><path d="M6.6 9.4 L1 15"/></g></svg>
<div class="a" style="left:1024px;top:446px;width:158px;height:21px;background:#313131;border-radius:3px"></div>
<div class="a t" style="left:1033.0px;top:451.14px;font-size:12px;color:#cccccc;transform:scaleX(0.9995);transform-origin:0 0;">Dart (Edge)</div>
<svg style="left:1164px;top:454px;" width="11" height="6" viewBox="0 0 11 6"><path d="M0.6 0.6 L5.5 5.4 L10.4 0.6" fill="none" stroke="#cccccc" stroke-width="1.1"/></svg>
<svg style="left:1190px;top:451px;" width="15" height="12" viewBox="0 0 15 12"><g fill="none" stroke="#cccccc" stroke-width="1.1"><path d="M0 1 H14 M0 4.3 H14 M0 7.6 H8 M0 10.9 H8 M9.5 7.5 L13.5 11.5 M13.5 7.5 L9.5 11.5"/></g></svg>
<div class="a" style="left:1215px;top:449px;width:1px;height:16px;background:#555555;"></div>
<svg style="left:1228px;top:450px;" width="13" height="13" viewBox="0 0 13 13"><path d="M0.5 4 V0.5 H4 M9 0.5 H12.5 V4 M12.5 9 V12.5 H9 M4 12.5 H0.5 V9" fill="none" stroke="#cccccc" stroke-width="1.1"/></svg>
<svg style="left:1253px;top:452px;" width="10" height="10" viewBox="0 0 10 10"><path d="M0.6 0.6 L9.4 9.4 M9.4 0.6 L0.6 9.4" stroke="#cccccc" stroke-width="1.2"/></svg>
<div class="a t" style="left:502.2px;top:476.60px;font-size:12px;color:#d4ae34;font-family:'Liberation Mono';-webkit-text-stroke:0.35px #d4ae34;">e)</div>
<div class="a t" style="left:502.2px;top:495.20px;font-size:12px;color:#d4ae34;font-family:'Liberation Mono';-webkit-text-stroke:0.35px #d4ae34;">ple)</div>
<div class="a t" style="left:502.2px;top:532.40px;font-size:12px;color:#d4ae34;font-family:'Liberation Mono';-webkit-text-stroke:0.35px #d4ae34;"> incompatible with dependency constraints.</div>
<div class="a t" style="left:502.2px;top:551.00px;font-size:12px;color:#d4ae34;font-family:'Liberation Mono';-webkit-text-stroke:0.35px #d4ae34;"> more information.</div>
<div class="a t" style="left:502.2px;top:569.60px;font-size:12px;color:#d4ae34;font-family:'Liberation Mono';-webkit-text-stroke:0.35px #d4ae34;">s\kabataku-calculator.dart on Edge in debug mode...</div>
<div class="a t" style="left:502.2px;top:588.20px;font-size:12px;color:#d4ae34;font-family:'Liberation Mono';-webkit-text-stroke:0.35px #d4ae34;">g service: ws://127.0.0.1:62358/3tQVhoerJfs=/ws</div>
<div class="a t" style="left:502.2px;top:606.80px;font-size:12px;color:#d4ae34;font-family:'Liberation Mono';-webkit-text-stroke:0.35px #d4ae34;">//127.0.0.1:62358/3tQVhoerJfs=/ws</div>
<div class="a t" style="left:502.2px;top:625.40px;font-size:12px;color:#3b8eea;font-family:'Liberation Mono';-webkit-text-stroke:0.35px #3b8eea;"> //127.0.0.1:62358/3tQVhoerJfs=/ws</div>
<div class="a t" style="left:502.2px;top:662.60px;font-size:12px;color:#3b8eea;font-family:'Liberation Mono';-webkit-text-stroke:0.35px #3b8eea;"> method in: org-dartlang-app:/web_entrypoint.dart.</div>
<div class="a" style="left:0px;top:697px;width:1280px;height:20px;background:#0078d4;"></div>
<div class="a" style="left:0px;top:717px;width:1280px;height:2px;background:#2b2b2b;"></div>
<div class="a" style="left:0px;top:717px;width:45px;height:2px;background:#777777;"></div>
<div class="a" style="left:315px;top:717px;width:188px;height:2px;background:#d0ccd3;"></div>
<div class="a" style="left:685px;top:717px;width:45px;height:2px;background:#777777;"></div>
<svg style="left:11px;top:701px;" width="11" height="12" viewBox="0 0 11 12"><path d="M1 5.3 L4.4 8.6 L1 11.6 M10 0.4 L6.6 3.4 L10 6.7" fill="none" stroke="#ffffff" stroke-width="1.2"/></svg>
<div class="a t" style="left:612.0px;top:702.59px;font-size:11px;color:#ffffff;transform:scaleX(0.9804);transform-origin:0 0;">Ln 127, Col 1 (3523 selected)</div>
<div class="a t" style="left:768.0px;top:702.59px;font-size:11px;color:#ffffff;transform:scaleX(0.9362);transform-origin:0 0;">Spaces: 2</div>
<div class="a t" style="left:829.0px;top:702.59px;font-size:11px;color:#ffffff;transform:scaleX(0.9624);transform-origin:0 0;">UTF-8</div>
<div class="a t" style="left:873.6px;top:702.59px;font-size:11px;color:#ffffff;transform:scaleX(0.8318);transform-origin:0 0;">CRLF</div>
<div class="a t" style="left:914.3px;top:702.59px;font-size:11px;color:#ffffff;transform:scaleX(1.0474);transform-origin:0 0;">{ }</div>
<div class="a t" style="left:932.0px;top:702.59px;font-size:11px;color:#ffffff;transform:scaleX(1.0057);transform-origin:0 0;">Dart</div>
<svg style="left:968px;top:700.5px;" width="14" height="12.5" viewBox="0 0 14 12.5"><g fill="#ffffff"><rect x="0.8" y="0.3" width="6.2" height="6.4" rx="2.6"/><rect x="7" y="0.3" width="6.2" height="6.4" rx="2.6"/><path d="M0 8.6 Q0 5.3 3 5.3 H11 Q14 5.3 14 8.6 Q14 12.4 7 12.4 Q0 12.4 0 8.6Z"/></g><g fill="#0078d4"><circle cx="4" cy="3.4" r="1.15"/><circle cx="10" cy="3.4" r="1.15"/><rect x="3.8" y="7" width="6.4" height="3.2" rx="0.6"/></g><g fill="#ffffff"><rect x="5.6" y="7" width="1" height="1.6"/><rect x="7.4" y="7" width="1" height="1.6"/></g></svg>
<svg style="left:997px;top:700px;" width="12" height="14" viewBox="0 0 12 14"><g fill="none" stroke="#ffffff" stroke-width="1.2"><circle cx="6" cy="6" r="5.2"/><circle cx="6" cy="6" r="2.6"/></g><path d="M6 6 V13" stroke="#ffffff" stroke-width="1.8" stroke-linecap="round"/></svg>
<div class="a t" style="left:1012.2px;top:702.59px;font-size:11px;color:#ffffff;transform:scaleX(0.9572);transform-origin:0 0;">Go Live</div>
<div class="a t" style="left:1064.8px;top:702.59px;font-size:11px;color:#ffffff;transform:scaleX(0.9965);transform-origin:0 0;">Edge (web-javascript)</div>
<svg style="left:1186px;top:701px;" width="12" height="12" viewBox="0 0 12 12"><g fill="none" stroke="#ffffff" stroke-width="1.2"><circle cx="6" cy="6" r="5.2"/><path d="M2.4 9.6 L9.6 2.4"/></g></svg>
<div class="a t" style="left:1202.3px;top:702.59px;font-size:11px;color:#ffffff;transform:scaleX(1.0037);transform-origin:0 0;">Prettier</div>
<svg style="left:1254px;top:700px;" width="11" height="14" viewBox="0 0 11 14"><g fill="none" stroke="#ffffff" stroke-width="1.2" stroke-linejoin="round"><path d="M2 10 V6 Q2 1.8 5.5 1.8 Q9 1.8 9 6 V10 L10.3 11.2 H0.7 Z M4 12.8 H7"/></g></svg>
<div class="a" style="left:34px;top:33px;width:3px;height:664px;background:#121212;"></div>
<div class="a" style="left:37px;top:0px;width:470px;height:717px;background:#3b3b3b;"></div>
<div class="a" style="left:503px;top:76px;width:4px;height:641px;background:#323232;"></div>
<div class="a" style="left:37px;top:0px;width:470px;height:38px;background:#202020;"></div>
<div class="a" style="left:117px;top:7px;width:186px;height:32px;background:#3b3b3b;border-radius:8px 8px 0 0"></div>
<div class="a" style="left:109px;top:30px;width:8px;height:8px;background:#3b3b3b;"></div>
<div class="a" style="left:101px;top:22px;width:16px;height:16px;background:#202020;border-radius:0 0 8px 0"></div>
<div class="a" style="left:303px;top:30px;width:8px;height:8px;background:#3b3b3b;"></div>
<div class="a" style="left:303px;top:22px;width:16px;height:16px;background:#202020;border-radius:0 0 0 8px"></div>
<svg style="left:52px;top:13.5px;" width="18" height="17" viewBox="0 0 18 17"><g fill="none" stroke="#d6d6d6" stroke-width="1.2" stroke-linejoin="round"><path d="M3 12.5 V5 Q3 3.5 4.5 3 L8.5 1.3 Q9.5 1 10 2"/><path d="M5.5 14 V6.5 Q5.5 5 7 4.5 L11 2.8 Q12 2.5 12.5 3.5"/><path d="M8 6.5 L15.5 4.5 Q16.5 4.3 16.5 5.5 V12.5 Q16.5 13.3 15.7 13.6 L9.2 15.8 Q8 16.2 8 15 Z"/></g></svg>
<svg style="left:88px;top:15px;" width="14" height="13" viewBox="0 0 14 13"><rect x="0.65" y="0.65" width="12.2" height="11.7" rx="2" fill="none" stroke="#ececec" stroke-width="1.3"/><path d="M0.8 2.5 Q0.8 0.8 2.5 0.8 H11 Q12.8 0.8 12.8 2.5 V3.8 H0.8 Z" fill="#ececec"/><path d="M3.4 3.5 V12.3" stroke="#ececec" stroke-width="1.2"/></svg>
<div class="a" style="left:124px;top:14px;width:15px;height:15px;background:#fafafa;"></div>
<svg style="left:124px;top:14px;" width="15" height="15" viewBox="0 0 15 15"><path d="M2.6 7.6 L4.4 9.4 L12.2 1.6 L8.6 1.6 Z" fill="#47c5fb"/><path d="M5.8 10.8 L8.8 7.8 L12.2 7.8 L9.4 10.8 Z" fill="#47c5fb"/><path d="M7.6 12.6 L9.4 10.8 L12.2 13.6 L8.6 13.6 Z" fill="#02539a"/><path d="M5.8 10.8 L7.6 9 L9.4 10.8 L7.6 12.6 Z" fill="#0c6bbd"/></svg>
<div class="a t" style="left:148.4px;top:15.99px;font-size:11px;color:#f0f0f0;transform:scaleX(0.9979);transform-origin:0 0;">localhost:62248</div>
<svg style="left:281px;top:16px;" width="10" height="10" viewBox="0 0 10 10"><path d="M0.7 0.7 L9.3 9.3 M9.3 0.7 L0.7 9.3" stroke="#e0e0e0" stroke-width="1.2"/></svg>
<svg style="left:310px;top:14px;" width="14" height="14" viewBox="0 0 14 14"><path d="M7 0 V14 M0 7 H14" stroke="#e8e8e8" stroke-width="1.3"/></svg>
<div class="a" style="left:393px;top:20px;width:12px;height:1px;background:#e0e0e0;"></div>
<div class="a" style="left:437px;top:15px;width:11px;height:11px;background:transparent;border:1px solid #e0e0e0;border-radius:1.5px"></div>
<svg style="left:480px;top:15px;" width="11" height="11" viewBox="0 0 11 11"><path d="M0.5 0.5 L10.5 10.5 M10.5 0.5 L0.5 10.5" stroke="#e8e8e8" stroke-width="1.1"/></svg>
<svg style="left:50px;top:50px;" width="15" height="14" viewBox="0 0 15 14"><path d="M14.5 7 H1 M7 0.8 L0.9 7 L7 13.2" fill="none" stroke="#767676" stroke-width="1.2"/></svg>
<svg style="left:83px;top:49px;" width="16" height="16" viewBox="0 0 16 16"><path d="M14.5 8.5 A6.5 6.5 0 1 1 12 3" fill="none" stroke="#dcdcdc" stroke-width="1.3"/><path d="M9.3 1.2 L14 1.2 L14 5.9 Z" fill="#dcdcdc"/></svg>
<div class="a" style="left:114px;top:42px;width:247px;height:30px;background:#2e2e2e;border:1px solid #595959;border-radius:15px"></div>
<svg style="left:121px;top:50px;" width="14" height="14" viewBox="0 0 14 14"><circle cx="7" cy="7" r="6.3" fill="none" stroke="#d8d8d8" stroke-width="1.1"/><path d="M7 6 V10.5" stroke="#d8d8d8" stroke-width="1.4"/><circle cx="7" cy="4" r="0.7" fill="#d8d8d8"/></svg>
<div class="a t" style="left:145.4px;top:50.66px;font-size:12.8px;color:#f2f2f2;transform:scaleX(0.9994);transform-origin:0 0;">localhost:62248</div>
<svg style="left:305px;top:50px;" width="17" height="14" viewBox="0 0 17 14"><g fill="none" stroke="#b8b8b8" stroke-width="1.1"><path d="M1.5 13 L5.8 2 L10.1 13 M3.2 9 H8.4"/><path d="M10.2 2.6 Q12.6 3.6 12.8 6.6"/><path d="M11.2 0.2 Q15.4 1.8 15.6 6.8"/></g></svg>
<svg style="left:335px;top:49px;" width="16" height="16" viewBox="0 0 16 16"><path d="M8 1 L10.1 5.6 L15 6.1 L11.3 9.4 L12.4 14.5 L8 11.8 L3.6 14.5 L4.7 9.4 L1 6.1 L5.9 5.6 Z" fill="none" stroke="#b8b8b8" stroke-width="1.1" stroke-linejoin="round"/></svg>
<svg style="left:375px;top:49px;" width="17" height="16" viewBox="0 0 17 16"><g fill="none" stroke="#e0e0e0" stroke-width="1.2" stroke-linejoin="round"><path d="M9.5 5.3 L8.7 5.2 L6.8 1 L4.9 5.2 L0.8 5.8 L3.9 8.7 L3.1 13.3 L5.8 11.8"/><path d="M9.8 6.2 H16 M9.8 9.1 H16 M9.8 12 H16"/></g></svg>
<div class="a" style="left:405.7px;top:45.9px;width:22.6px;height:22.6px;border-radius:50%;background:linear-gradient(#9fc6e6 0%,#b3d5ee 55%,#e4eef5 80%,#c9d9e6 100%);overflow:hidden"><div class="a" style="left:6.5px;top:2.2px;width:11px;height:3.6px;background:linear-gradient(90deg,#c0304a,#b03050 60%,#5a4a9a);border-radius:6px 6px 1px 1px"></div><div class="a" style="left:9.6px;top:5.6px;width:4px;height:8.5px;background:#3c4a5e;border-radius:1px"></div><div class="a" style="left:10.2px;top:13.5px;width:3px;height:5px;background:#6d7f92"></div></div>
<div class="a" style="left:444.0px;top:55.3px;width:3px;height:3px;background:#e8e8e8;border-radius:50%"></div>
<div class="a" style="left:449.5px;top:55.3px;width:3px;height:3px;background:#e8e8e8;border-radius:50%"></div>
<div class="a" style="left:455.0px;top:55.3px;width:3px;height:3px;background:#e8e8e8;border-radius:50%"></div>
<svg style="left:470px;top:42px;" width="32" height="30" viewBox="0 0 32 30"><defs><linearGradient id="cp1" x1="0" y1="0" x2="0" y2="1"><stop offset="0" stop-color="#1a9cf5"/><stop offset="0.5" stop-color="#27bf8a"/><stop offset="1" stop-color="#eccf1e"/></linearGradient><linearGradient id="cp2" x1="0" y1="0" x2="0" y2="1"><stop offset="0" stop-color="#a957e8"/><stop offset="0.55" stop-color="#f0508a"/><stop offset="1" stop-color="#ff9c3c"/></linearGradient></defs><path d="M9.8 6 H21.8 Q23.4 6 22.6 7.6 L21.6 9.6 H19.8 Q18 9.6 17.5 11.3 L15.2 19 Q14.8 19.8 13.6 19.8 H7.4 Q5.7 19.8 6.1 18.1 L8.5 7.3 Q8.8 6 9.8 6 Z" fill="url(#cp1)"/><path d="M15 6.2 H21.8 Q23.4 6.2 22.6 7.6 L21.6 9.6 H18.5 Z" fill="#2a5bd7"/><path d="M24.6 9.6 Q26.4 9.6 26.1 11.3 L23.8 23.1 Q23.5 24.7 22 24.7 H13.2 Q11.4 24.7 12 22.9 L12.8 20.6 H14.6 Q16.4 20.6 16.9 18.8 L19.2 11.3 Q19.6 9.6 21.2 9.6 Z" fill="url(#cp2)"/></svg>
<div class="a" style="left:42px;top:76px;width:461px;height:641px;background:#fdf7ff;border-radius:7px 7px 0 0;overflow:hidden">
<div class="a t" style="left:14.8px;top:16.74px;font-size:19.8px;color:#26242a;transform:scaleX(1.0455);transform-origin:0 0;">Kabataku Kalkulator</div>
<div class="a" style="left:378.7px;top:16.6px;width:120px;height:11.4px;background:#b8403f;transform:rotate(45deg);box-shadow:0 1px 3px rgba(0,0,0,.35)"></div>
<div class="a" style="left:378.7px;top:16.6px;width:120px;height:11.4px;transform:rotate(45deg);color:#fff;font-size:9.5px;font-weight:bold;text-align:center;line-height:11.4px;letter-spacing:0px">DEBUG</div>
<div class="a" style="left:23px;top:246.3px;width:416px;height:44.1px;background:transparent;border:1px solid #79747e;border-radius:4px"></div>
<div class="a t" style="left:37.9px;top:260.23px;font-size:15.2px;color:#524e58;transform:scaleX(1.0427);transform-origin:0 0;">Angka pertama</div>
<div class="a" style="left:23px;top:306.3px;width:416px;height:44px;background:transparent;border:1px solid #79747e;border-radius:4px"></div>
<div class="a t" style="left:37.9px;top:319.83px;font-size:15.2px;color:#524e58;transform:scaleX(1.0184);transform-origin:0 0;">Angka kedua</div>
<div class="a btn" style="left:64px;top:373.6px">+</div>
<div class="a btn" style="left:157.5px;top:373.6px">-</div>
<div class="a btn" style="left:251px;top:373.6px">&#215;</div>
<div class="a btn" style="left:344.5px;top:373.6px">&#247;</div>
</div>
</body></html>
